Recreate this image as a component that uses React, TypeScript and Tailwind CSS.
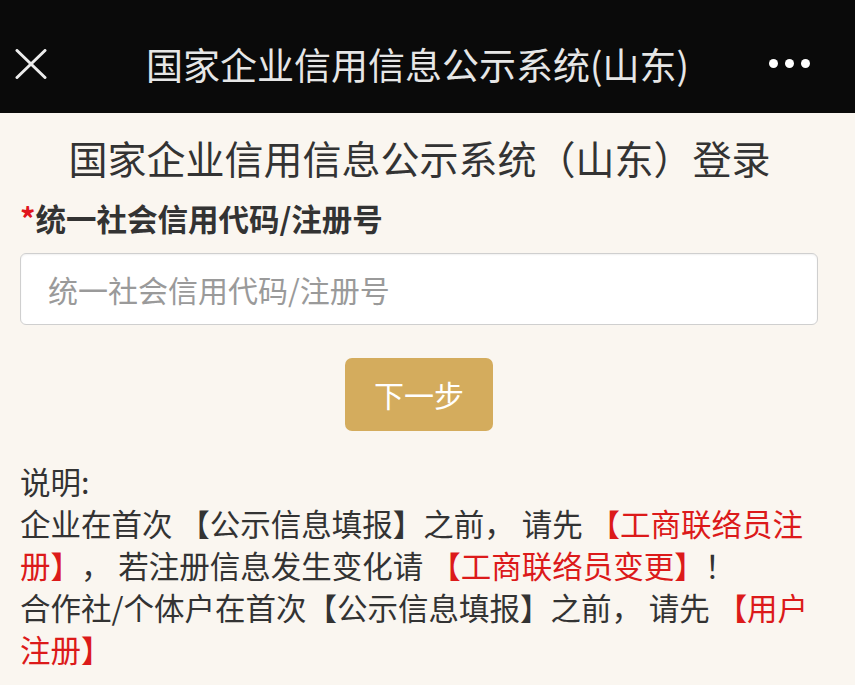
import React from "react";

export default function App() {
  const font = { fontFamily: '"Noto Sans CJK SC", "Noto Sans", sans-serif' };
  return (
    <div
      className="w-[855px] h-[685px] overflow-hidden bg-[#faf6f0] text-[#333333] [text-spacing-trim:space-all]"
      style={font}
    >
      {/* Top bar */}
      <div className="h-[113px] bg-[#0a0a0a] flex items-center pt-[14px] px-[15px]">
        <svg width="32" height="30" viewBox="0 0 32 30" className="shrink-0">
          <line x1="2" y1="1.5" x2="30" y2="28.5" stroke="#ececec" strokeWidth="3" strokeLinecap="round" />
          <line x1="30" y1="1.5" x2="2" y2="28.5" stroke="#ececec" strokeWidth="3" strokeLinecap="round" />
        </svg>
        <div className="flex-1 pl-[99px] text-[37px] leading-[44px] text-[#e6e6e6] whitespace-nowrap">
          国家企业信用信息公示系统(山东)
        </div>
        <div className="flex items-center gap-[7px] pr-[30px]">
          <span className="w-[9px] h-[9px] rounded-full bg-white" />
          <span className="w-[9px] h-[9px] rounded-full bg-white" />
          <span className="w-[9px] h-[9px] rounded-full bg-white" />
        </div>
      </div>

      {/* Content */}
      <div className="px-[20px]">
        <h1 className="mt-[19px] pr-[16px] text-center text-[39px] leading-[50px] font-normal text-[#333333] whitespace-nowrap">
          国家企业信用信息公示系统（山东）登录
        </h1>

        <div className="mt-[16px] text-[30.5px] leading-[40px] font-bold text-[#333333]">
          <span className="text-[#e0161e]">*</span>统一社会信用代码/注册号
        </div>

        <div className="mt-[15px] h-[72px] w-[798px] rounded-[6px] border border-[#cfcfcf] bg-white flex items-center px-[27px] shadow-[inset_0_1px_2px_rgba(0,0,0,0.06)]">
          <span className="text-[30px] text-[#9a9a9a]">统一社会信用代码/注册号</span>
        </div>

        <div className="mt-[33px] flex justify-center pr-[17px]">
          <button className="w-[148px] h-[73px] rounded-[7px] bg-[#d4ac5d] text-white text-[30px] flex items-center justify-center">
            下一步
          </button>
        </div>

        <div className="mt-[29px] text-[30.5px] leading-[42px] text-[#333333] whitespace-nowrap">
          <p>说明:</p>
          <p>
            企业在首次 【公示信息填报】之前， 请先 <span className="text-[#dc1a1a]">【工商联络员注<br />册】</span>， 若注册信息发生变化请 <span className="text-[#dc1a1a]">【工商联络员变更】</span>！
          </p>
          <p>
            合作社/个体户在首次【公示信息填报】之前， 请先 <span className="text-[#dc1a1a]">【用户<br />注册】</span>
          </p>
        </div>
      </div>
    </div>
  );
}
